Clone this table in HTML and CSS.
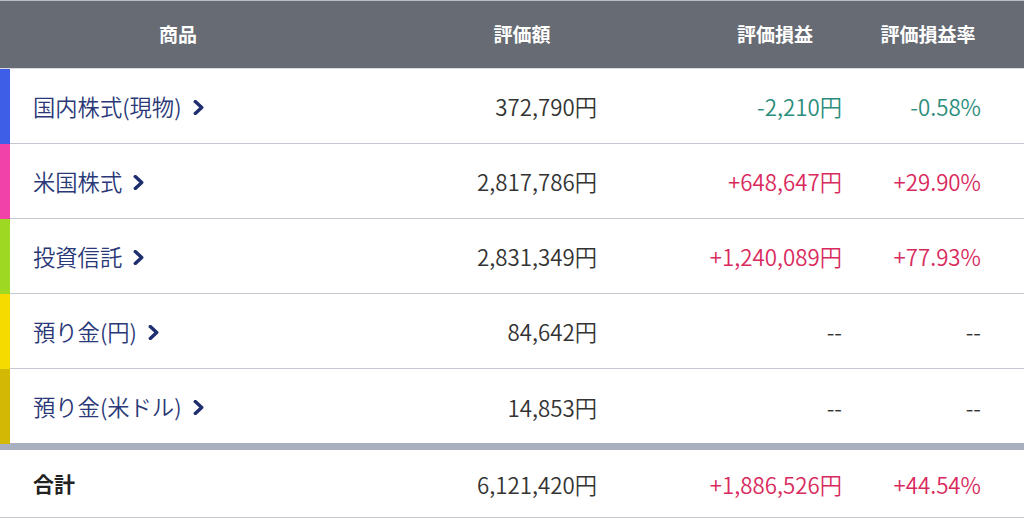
FILE: index.html
```html
<!DOCTYPE html>
<html lang="ja">
<head>
<meta charset="utf-8">
<title>資産</title>
<link rel="stylesheet" href="styles.css">
</head>
<body>
<div class="table">
  <div class="row head">
    <div class="hcell hname">商品</div>
    <div class="hcell">評価額</div>
    <div class="hcell">評価損益</div>
    <div class="hcell">評価損益率</div>
    <div class="hcell"></div>
  </div>

  <div class="row item">
    <div class="bar bar-blue"></div>
    <div class="cell name"><span>国内株式(現物)</span><svg class="chev" viewBox="0 0 10 14"><polyline points="2,1.5 8,7 2,12.5"/></svg></div>
    <div class="cell amt">372,790円</div>
    <div class="cell pnl minus">-2,210円</div>
    <div class="cell rate minus">-0.58%</div>
    <div class="cell"></div>
  </div>

  <div class="row item">
    <div class="bar bar-pink"></div>
    <div class="cell name"><span>米国株式</span><svg class="chev" viewBox="0 0 10 14"><polyline points="2,1.5 8,7 2,12.5"/></svg></div>
    <div class="cell amt">2,817,786円</div>
    <div class="cell pnl plus">+648,647円</div>
    <div class="cell rate plus">+29.90%</div>
    <div class="cell"></div>
  </div>

  <div class="row item">
    <div class="bar bar-green"></div>
    <div class="cell name"><span>投資信託</span><svg class="chev" viewBox="0 0 10 14"><polyline points="2,1.5 8,7 2,12.5"/></svg></div>
    <div class="cell amt">2,831,349円</div>
    <div class="cell pnl plus">+1,240,089円</div>
    <div class="cell rate plus">+77.93%</div>
    <div class="cell"></div>
  </div>

  <div class="row item">
    <div class="bar bar-yellow"></div>
    <div class="cell name"><span>預り金(円)</span><svg class="chev" viewBox="0 0 10 14"><polyline points="2,1.5 8,7 2,12.5"/></svg></div>
    <div class="cell amt">84,642円</div>
    <div class="cell pnl">--</div>
    <div class="cell rate">--</div>
    <div class="cell"></div>
  </div>

  <div class="row item last">
    <div class="bar bar-olive"></div>
    <div class="cell name"><span>預り金(米ドル)</span><svg class="chev" viewBox="0 0 10 14"><polyline points="2,1.5 8,7 2,12.5"/></svg></div>
    <div class="cell amt">14,853円</div>
    <div class="cell pnl">--</div>
    <div class="cell rate">--</div>
    <div class="cell"></div>
  </div>

  <div class="row total">
    <div class="cell name total-name">合計</div>
    <div class="cell amt">6,121,420円</div>
    <div class="cell pnl plus">+1,886,526円</div>
    <div class="cell rate plus">+44.54%</div>
    <div class="cell"></div>
  </div>
</div>
</body>
</html>
```

FILE: styles.css
```css
* { box-sizing: border-box; }
html, body {
  margin: 0;
  padding: 0;
  background: #ffffff;
}
body {
  font-family: "Noto Sans CJK JP", "Noto Sans", sans-serif;
  color: #333333;
  width: 1024px;
  height: 519px;
  overflow: hidden;
}
.table {
  width: 1024px;
}
.row {
  display: grid;
  grid-template-columns: 10px 346px 332px 174px 132px 30px;
}
.head {
  grid-template-columns: 356px 332px 174px 132px 30px;
  background: #676b74;
  border-top: 1px solid #b9bcc2;
  border-bottom: 1px solid #d9dce2;
  height: 69px;
}
.hcell {
  color: #ffffff;
  font-weight: 700;
  font-size: 19px;
  display: flex;
  align-items: center;
  justify-content: center;
  padding-bottom: 2px;
}
.item {
  height: 75px;
}
.bar { height: 75px; }
.bar-blue { background: #3f5ee8; }
.bar-pink { background: #f042a9; }
.bar-green { background: #9fd822; }
.bar-yellow { background: #f6db00; }
.bar-olive { background: #d4b806; }
.item .cell {
  border-bottom: 1px solid #c3c8d1;
}
.item.last .cell {
  border-bottom: none;
}
.item.last {
  border-bottom: 7px solid #a8afbf;
  height: 81px;
}
.cell {
  display: flex;
  align-items: center;
  justify-content: flex-end;
  font-size: 22.3px;
  font-weight: 350;
  white-space: nowrap;
}
.name {
  justify-content: flex-start;
  padding-left: 23px;
  color: #2a3878;
  padding-bottom: 1px;
}
.chev {
  width: 11px;
  height: 15px;
  margin-left: 11px;
  margin-top: 3px;
  fill: none;
  stroke: #1f2e6e;
  stroke-width: 3.2;
  stroke-linecap: round;
  stroke-linejoin: round;
}
.amt { padding-right: 91px; color: #333333; }
.pnl { padding-right: 20px; color: #333333; }
.rate { padding-right: 13px; color: #333333; }
.minus { color: #2a8d7c; }
.plus { color: #d92a5e; }
.total {
  grid-template-columns: 356px 332px 174px 132px 30px;
  height: 68px;
  border-bottom: 1px solid #c3c8d1;
}
.total-name {
  padding-left: 33px;
  color: #222222;
  font-weight: 700;
  font-size: 21px;
}
```
